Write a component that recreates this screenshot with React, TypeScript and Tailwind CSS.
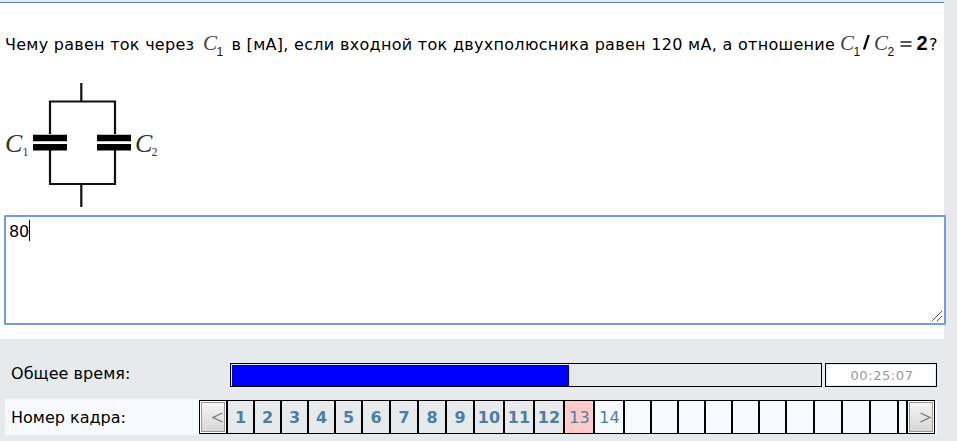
const cells = [
  { w: 27, t: '1', k: 'done' },
  { w: 27, t: '2', k: 'done' },
  { w: 27, t: '3', k: 'done' },
  { w: 27, t: '4', k: 'done' },
  { w: 27, t: '5', k: 'done' },
  { w: 28, t: '6', k: 'done' },
  { w: 28, t: '7', k: 'done' },
  { w: 28, t: '8', k: 'done' },
  { w: 28, t: '9', k: 'done' },
  { w: 30, t: '10', k: 'done' },
  { w: 30, t: '11', k: 'done' },
  { w: 30, t: '12', k: 'done' },
  { w: 30, t: '13', k: 'current' },
  { w: 30, t: '14', k: 'next' },
  ...[27, 27, 27, 27, 27, 27, 28, 28, 28, 28, 9].map((w) => ({ w, t: '', k: 'next' })),
];

const look: Record<string, string> = {
  done: 'bg-[#e6eaed] font-bold',
  current: 'bg-[#ffcaca] pl-px',
  next: 'bg-[#f7fafe] pl-px',
};

function Var({ x, n }: { x: number; n: string }) {
  return (
    <>
      <text x={x} y="17.5" fontSize="21" fontStyle="italic" fill="#444" fontFamily="Liberation Serif, serif">C</text>
      <text x={x + 13.5} y="23.5" fontSize="12" fill="#111" fontFamily="Liberation Sans, sans-serif">{n}</text>
    </>
  );
}

function Circuit() {
  return (
    <svg width="160" height="126" viewBox="0 0 160 126" className="block">
      <path d="M77.3 2V20.5M46 53V20.5H111V53M46 68V103H111V68M77.3 103V126" fill="none" stroke="#111" strokeWidth="2.2" />
      <path d="M29 57H63M29 66.3H63M93 57H127M93 66.3H127" stroke="#000" strokeWidth="6.4" />
      <g fontFamily="Liberation Serif, serif" fill="#333">
        <text x="1" y="70.5" fontSize="26" fontStyle="italic">C</text>
        <text x="18.5" y="75" fontSize="12">1</text>
        <text x="131" y="70.5" fontSize="26" fontStyle="italic">C</text>
        <text x="147.5" y="75" fontSize="12">2</text>
      </g>
    </svg>
  );
}

function StepButton({ d }: { d: string }) {
  return (
    <div className="w-[28px] border border-black bg-white p-px">
      <div className="flex h-full items-center justify-end border border-[#999] bg-linear-to-b from-[#f4f4f4] to-[#d8d8d8] pt-px pr-px">
        <svg width="11" height="11" fill="none" stroke="#777" strokeWidth="1.3">
          <path d={d} />
        </svg>
      </div>
    </div>
  );
}

export default function App() {
  return (
    <div className="h-[441px] w-[957px] overflow-hidden bg-[#e6eaed] pt-[2px] font-['DejaVu_Sans',sans-serif] text-base text-black">
      <div className="h-[337px] w-[944px] border-t border-[#5b8cac] bg-white pl-1">
        <div className="flex h-[78px] pt-[29px] leading-[26px] whitespace-nowrap">
          <span className="ml-px w-[198px] shrink-0 tracking-[0.27px]">Чему равен ток через</span>
          <svg width="22" height="26" className="shrink-0 overflow-visible"><Var x={0} n="1" /></svg>
          <span className="ml-[6.5px] w-[608.5px] shrink-0 tracking-[0.3px]">в [мА], если входной ток двухполюсника равен 120 мА, а отношение</span>
          <svg width="89" height="26" className="shrink-0 overflow-visible">
            <Var x={0} n="1" />
            <path d="M24 17.5L28.7 3" stroke="#000" strokeWidth="2.4" />
            <Var x={34} n="2" />
            <path d="M60.5 10H71.5M60.5 14H71.5" stroke="#222" strokeWidth="1.3" />
            <text x="76.5" y="17.5" fontSize="20" fontWeight="bold" fontFamily="Liberation Sans, sans-serif">2</text>
          </svg>
          <span>?</span>
        </div>
        <Circuit />
        <div className="mt-[8px] flex h-[110px] w-[942px] rounded-[1px] border-2 border-[#729edb] bg-white pt-[3px] pl-[3px]">
          <span className="h-[21px] border-r border-black leading-[23px] tracking-[-0.1px]">80</span>
          <svg width="12" height="12" className="mr-[1px] mb-px ml-auto self-end" stroke="#555" strokeWidth="1" shapeRendering="crispEdges">
            <path d="M1 11L11 1M6 11L11 6" />
          </svg>
        </div>
      </div>

      <div className="flex h-[60px] pt-[24px] pl-[11px]">
        <span className="w-[219px] leading-[21px] tracking-[0.05px]">Общее время:</span>
        <div className="h-[24px] w-[592px] border border-black p-px">
          <div className="h-[21px] w-[337px] border border-[#0000b4] bg-[#0000ff]" />
        </div>
        <div className="ml-[3px] h-[24px] w-[112px] border border-black bg-[#e6eaed] p-px">
          <div className="h-full bg-white pl-[2px] text-center text-[13px] leading-[22px] tracking-[0.6px] text-[#999]">00:25:07</div>
        </div>
      </div>

      <div className="flex h-[36px] pl-[5px]">
        <div className="w-[194px] bg-[#f7fafe] pl-[6px] leading-[37px]">Номер кадра:</div>
        <div className="mt-px flex h-[34px] text-[#4f7f9f]">
          <StepButton d="M10.5 1L1 5.5L10.5 10" />
          {cells.map((c, i) => (
            <div key={i} className={`flex items-center justify-center border border-black pt-px ${look[c.k]}`} style={{ width: c.w }}>
              {c.t}
            </div>
          ))}
          <StepButton d="M0.5 1L10 5.5L0.5 10" />
        </div>
        <div className="w-[2px] bg-[#f7fafe]" />
      </div>
    </div>
  );
}
